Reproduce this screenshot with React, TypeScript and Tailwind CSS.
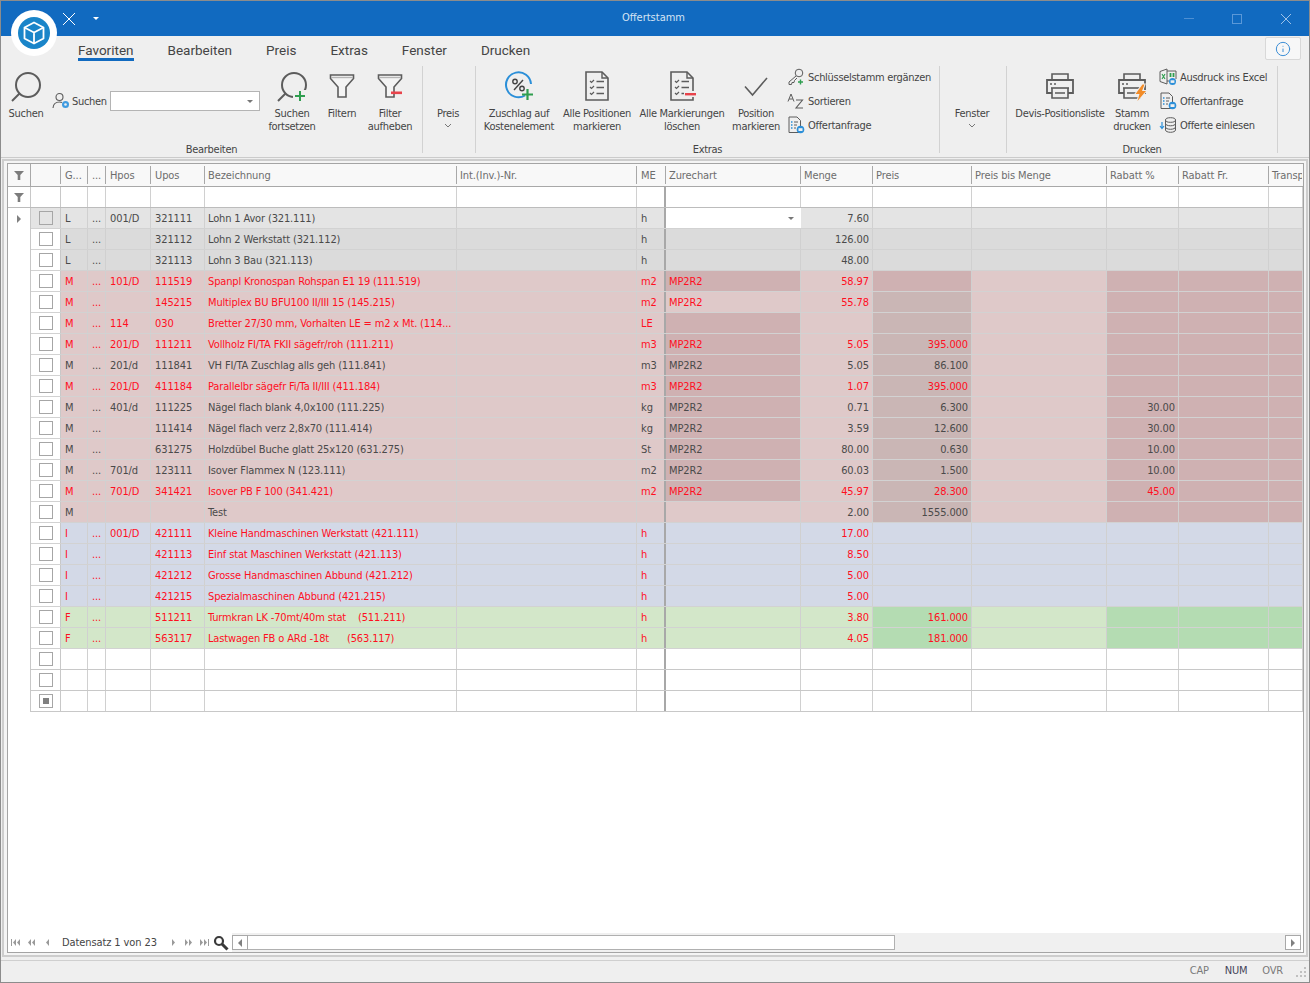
import type { ReactNode } from "react"
import { Info } from "lucide-react"

const GRAY = "#5c5c5c"
const GREEN = "#2f9e4f"
const RED = "#e8434b"
const BLUE = "#2b8fd8"

// funnel used in the ribbon and in the grid header
function Funnel({ minus }: { minus?: boolean }) {
  return (
    <svg width="28" height="28" viewBox="0 0 28 28" fill="none">
      <path d="M2.5 3h23v3.5l-7.5 8.5v10h-8V15L2.5 6.5z" stroke={GRAY} strokeWidth="1.6" fill="#f4f4f4" />
      <path d="M3 5.5h22" stroke="#b5b5b5" strokeWidth="1.4" />
      {minus && <rect x="19" y="15" width="8" height="4" fill="#efefef" />}
      {minus && <rect x="15" y="19.5" width="11" height="2.6" fill={RED} />}
    </svg>
  )
}

function SearchBig({ plus }: { plus?: boolean }) {
  return (
    <svg width="32" height="32" viewBox="0 -2 32 32" fill="none">
      <circle cx="18" cy="13" r="12" stroke={GRAY} strokeWidth="2" />
      <path d="M9.500 21.500 2 29" stroke={GRAY} strokeWidth="2" />
      {plus && <rect x="17" y="18" width="14" height="12" fill="#efefef" />}
      {plus && <path d="M24 19v10M19 24h10" stroke={GREEN} strokeWidth="2" />}
    </svg>
  )
}

function PercentIcon() {
  return (
    <svg width="30" height="30" viewBox="0 0 30 30" fill="none">
      <path d="M21 24.500A12.500 12.500 0 1 1 27 13" stroke={BLUE} strokeWidth="2" />
      <circle cx="11" cy="10.500" r="2.200" stroke="#444" strokeWidth="1.400" />
      <circle cx="18" cy="17.500" r="2.200" stroke="#444" strokeWidth="1.400" />
      <path d="M19 9 10 19" stroke="#444" strokeWidth="1.400" />
      <path d="M23.500 18v11M18 23.500h11" stroke={GREEN} strokeWidth="2.200" />
    </svg>
  )
}

function ListDoc({ minus }: { minus?: boolean }) {
  return (
    <svg width="30" height="32" viewBox="0 0 30 32" fill="none">
      <path d="M4 2h16l6 6v22H4z" stroke={GRAY} strokeWidth="1.600" />
      <path d="M20 2v6h6" stroke={GRAY} strokeWidth="1.400" />
      <path d="M8 11l1.500 1.500L12 10M8 17l1.500 1.500L12 16M8 23l1.500 1.500L12 22" stroke={GRAY} strokeWidth="1.200" />
      <path d="M14.500 11.500H22M14.500 17.500H22M14.500 23.500H22" stroke={GRAY} strokeWidth="1.600" />
      {minus && <rect x="17" y="21" width="13" height="6" fill="#efefef" />}
      {minus && <rect x="18" y="23" width="11" height="2.400" fill={RED} />}
    </svg>
  )
}

function Check() {
  return (
    <svg width="28" height="28" viewBox="0 0 28 28" fill="none">
      <path d="M3 14.500 10.500 23 25 6" stroke={GRAY} strokeWidth="1.600" />
    </svg>
  )
}

function Printer({ bolt }: { bolt?: boolean }) {
  return (
    <svg width="30" height="30" viewBox="0 0 30 30" fill="none">
      <path d="M7 9V3h16v6" stroke={GRAY} strokeWidth="1.600" />
      <path d="M7 22H2V9h26v13h-5" stroke={GRAY} strokeWidth="1.800" />
      <path d="M5 13h2M9 13h2" stroke={GRAY} strokeWidth="1.400" />
      <path d="M6 17h18" stroke={GRAY} strokeWidth="1.600" />
      <path d="M7 17v10h16V17M10 22h10" stroke={GRAY} strokeWidth="1.600" />
      {bolt && <path d="M25.500 13.500 18.500 23h4l-2 7 8.500-10h-4l2.500-6.500z" fill="#efefef" stroke="#efefef" strokeWidth="2" />}
      {bolt && <path d="M25.500 13.500 18.500 23h4l-2 7 8.500-10h-4l2.500-6.500z" fill="#f28c28" />}
    </svg>
  )
}

function PersonGear() {
  return (
    <svg width="18" height="18" viewBox="0 0 18 18" fill="none">
      <circle cx="7.500" cy="5" r="3.500" stroke={GRAY} strokeWidth="1.100" />
      <path d="M1 16c.3-4 2.500-6 6.500-6 1 0 1.800.1 2.500.5" stroke={GRAY} strokeWidth="1.100" />
      <circle cx="13.500" cy="12.500" r="3.500" fill="#3f9be0" />
      <circle cx="13.500" cy="12.500" r="1.300" fill="#efefef" />
    </svg>
  )
}

function KeyIcon() {
  return (
    <svg width="18" height="18" viewBox="0 0 18 18" fill="none">
      <circle cx="12" cy="5" r="3.800" stroke={GRAY} strokeWidth="1" />
      <path d="M9 8 2 14v2.500h2.500l.5-2h2l.5-2 2.500-2.500" stroke={GRAY} strokeWidth="1" />
      <path d="M13.500 11.500v5M11 14h5" stroke={GREEN} strokeWidth="1.400" />
    </svg>
  )
}

function AzIcon() {
  return (
    <svg width="18" height="18" viewBox="0 0 18 18" fill="none">
      <path d="M1 9.500 4 2l3 7.500M2.200 7h3.600" stroke={GRAY} strokeWidth="1" />
      <path d="M9 8h6.500L9 16h7" stroke={GRAY} strokeWidth="1.100" />
    </svg>
  )
}

function DocMail() {
  return (
    <svg width="18" height="18" viewBox="0 0 18 18" fill="none">
      <path d="M2 1h8l3.500 3.500V16.500H2z" stroke={GRAY} strokeWidth="1" />
      <path d="M4 6h1.500M4 9h1.500M4 12h1.500" stroke={BLUE} strokeWidth="1.400" />
      <path d="M7 6h4M7 9h3M7 12h2" stroke={GRAY} strokeWidth="1" />
      <circle cx="13.500" cy="13.500" r="3.800" fill={BLUE} />
      <rect x="11.500" y="12.200" width="4" height="2.800" fill="#efefef" />
    </svg>
  )
}

function ExcelIcon() {
  return (
    <svg width="18" height="18" viewBox="0 0 18 18" fill="none">
      <path d="M1 3.500 8 1v15l-7-2.500z" stroke={GRAY} strokeWidth="1" />
      <path d="M3 6l3 5M6 6l-3 5" stroke={GREEN} strokeWidth="1.100" />
      <path d="M8 3h9v8M8 13h2" stroke={GRAY} strokeWidth="1" />
      <path d="M11.500 5v4M14.500 5v4" stroke={GREEN} strokeWidth="1.800" />
      <circle cx="13.500" cy="13.500" r="3.500" fill={BLUE} />
      <rect x="11.600" y="12.300" width="3.800" height="2.600" fill="#efefef" />
    </svg>
  )
}

function DbImport() {
  return (
    <svg width="18" height="18" viewBox="0 0 18 18" fill="none">
      <ellipse cx="11.500" cy="4" rx="5" ry="2.300" stroke={GRAY} strokeWidth="1" />
      <path d="M6.500 4v10c0 1.300 2.200 2.300 5 2.300s5-1 5-2.300V4M6.500 7.500c0 1.300 2.200 2.300 5 2.300s5-1 5-2.300M6.500 11c0 1.300 2.200 2.300 5 2.300s5-1 5-2.300" stroke={GRAY} strokeWidth="1" />
      <path d="M3 6v6M1 10l2 2.500L5 10" stroke={BLUE} strokeWidth="1.200" />
    </svg>
  )
}

function Chevron() {
  return (
    <svg width="8" height="5" viewBox="0 0 8 5" className="mt-[3px]" fill="none">
      <path d="M1 1l3 3 3-3" stroke="#777" strokeWidth="1" />
    </svg>
  )
}

function Caret() {
  return <div className="w-0 h-0 border-l-[3px] border-r-[3px] border-t-[3px] border-l-transparent border-r-transparent border-t-[#777]" />
}

function Big({ w, icon, label }: { w: string; icon?: ReactNode; label: ReactNode }) {
  return (
    <div className={`${w} shrink-0 flex flex-col items-center text-center whitespace-nowrap`}>
      <div className="h-[41px] pb-[1px] flex items-center justify-center">{icon}</div>
      {label}
    </div>
  )
}

function Small({ icon, label }: { icon: ReactNode; label: string }) {
  return (
    <div className="h-[24px] flex items-center gap-[3px] whitespace-nowrap">
      <span className="w-[18px] flex justify-center">{icon}</span>
      <span>{label}</span>
    </div>
  )
}

function Group({ w, caption, children }: { w: string; caption?: string; children: ReactNode }) {
  return (
    <div className={`${w} h-[90px] flex flex-col`}>
      <div className="flex-1 flex">{children}</div>
      <div className="text-center h-[13px]">{caption}</div>
    </div>
  )
}

function Divider() {
  return <div className="w-px h-[87px] bg-[#d2d2d2]" />
}

function Ribbon() {
  return (
    <div className="h-[95px] pt-[4px] flex text-[11px] leading-[13px] text-[#454545] tracking-[-0.3px]">
      <Group w="w-[421px]" caption="Bearbeiten">
        <Big w="w-[50px]" icon={<SearchBig />} label="Suchen" />
        <div className="w-[211px] pt-[25px] pl-[1px]">
          <div className="flex items-center h-[20px]">
            <PersonGear />
            <span className="ml-[2px] w-[36px]">Suchen</span>
            <div className="ml-[2px] w-[150px] h-[20px] bg-white border border-[#b4b4b4] flex items-center justify-end pr-[6px]">
              <Caret />
            </div>
          </div>
        </div>
        <Big w="w-[60px]" icon={<SearchBig plus />} label={<>Suchen<br />fortsetzen</>} />
        <Big w="w-[40px]" icon={<Funnel />} label="Filtern" />
        <Big w="w-[56px]" icon={<Funnel minus />} label={<>Filter<br />aufheben</>} />
      </Group>
      <Divider />
      <Group w="w-[50px]">
        <Big w="w-full" label={<><span>Preis</span><div className="flex justify-center"><Chevron /></div></>} />
      </Group>
      <div className="w-[2px]" />
      <Divider />
      <Group w="w-[463px]" caption="Extras">
        <Big w="w-[86px]" icon={<PercentIcon />} label={<>Zuschlag auf<br />Kostenelement</>} />
        <Big w="w-[70px]" icon={<ListDoc />} label={<>Alle Positionen<br />markieren</>} />
        <Big w="w-[100px]" icon={<ListDoc minus />} label={<>Alle Markierungen<br />löschen</>} />
        <Big w="w-[48px]" icon={<Check />} label={<>Position<br />markieren</>} />
        <div className="ml-[7px] -mt-[1px]">
          <Small icon={<KeyIcon />} label="Schlüsselstamm ergänzen" />
          <Small icon={<AzIcon />} label="Sortieren" />
          <Small icon={<DocMail />} label="Offertanfrage" />
        </div>
      </Group>
      <Divider />
      <Group w="w-[64px]">
        <Big w="w-full" label={<><span>Fenster</span><div className="flex justify-center"><Chevron /></div></>} />
      </Group>
      <div className="w-[2px]" />
      <Divider />
      <Group w="w-[270px]" caption="Drucken">
        <Big w="w-[106px]" icon={<Printer />} label="Devis-Positionsliste" />
        <Big w="w-[38px]" icon={<Printer bolt />} label={<>Stamm<br />drucken</>} />
        <div className="ml-[8px] -mt-[1px]">
          <Small icon={<ExcelIcon />} label="Ausdruck ins Excel" />
          <Small icon={<DocMail />} label="Offertanfrage" />
          <Small icon={<DbImport />} label="Offerte einlesen" />
        </div>
      </Group>
      <Divider />
    </div>
  )
}

// grid columns, widths include the right border
const cols = [
  { w: "w-[27px]", title: "G...", pad: "pl-[4px]" },
  { w: "w-[18px]", title: "...", pad: "pl-[4px]" },
  { w: "w-[45px]", title: "Hpos", pad: "pl-[4px]" },
  { w: "w-[54px]", title: "Upos", pad: "pl-[4px]" },
  { w: "w-[252px]", title: "Bezeichnung", pad: "pl-[3px]" },
  { w: "w-[180px]", title: "Int.(Inv.)-Nr.", pad: "pl-[3px]" },
  { w: "w-[29px]", title: "ME", pad: "pl-[4px]" },
  { w: "w-[135px]", title: "Zurechart", pad: "pl-[3px]" },
  { w: "w-[72px]", title: "Menge", pad: "pl-[3px]" },
  { w: "w-[99px]", title: "Preis", pad: "pl-[3px]" },
  { w: "w-[135px]", title: "Preis bis Menge", pad: "pl-[3px]" },
  { w: "w-[72px]", title: "Rabatt %", pad: "pl-[3px]" },
  { w: "w-[90px]", title: "Rabatt Fr.", pad: "pl-[3px]" },
  { w: "w-[34px]", title: "Transport", pad: "pl-[3px]" },
]

type Row = [string, string, string, string, string, string, string, string, string, boolean, boolean?]

// G, Hpos, Upos, Bezeichnung, ME, Zurechart, Menge, Preis, Rabatt, red, Zurechart dark
const rows: Row[] = [
  ["L", "001/D", "321111", "Lohn 1 Avor (321.111)", "h", "", "7.60", "", "", false],
  ["L", "", "321112", "Lohn 2 Werkstatt (321.112)", "h", "", "126.00", "", "", false],
  ["L", "", "321113", "Lohn 3 Bau (321.113)", "h", "", "48.00", "", "", false],
  ["M", "101/D", "111519", "Spanpl Kronospan Rohspan E1 19 (111.519)", "m2", "MP2R2", "58.97", "", "", true, true],
  ["M", "", "145215", "Multiplex BU BFU100 II/III 15 (145.215)", "m2", "MP2R2", "55.78", "", "", true],
  ["M", "114", "030", "Bretter 27/30 mm, Vorhalten LE = m2 x Mt. (114...", "LE", "", "", "", "", true, true],
  ["M", "201/D", "111211", "Vollholz FI/TA FKII sägefr/roh (111.211)", "m3", "MP2R2", "5.05", "395.000", "", true, true],
  ["M", "201/d", "111841", "VH FI/TA Zuschlag alls geh (111.841)", "m3", "MP2R2", "5.05", "86.100", "", false, true],
  ["M", "201/D", "411184", "Parallelbr sägefr Fi/Ta II/III (411.184)", "m3", "MP2R2", "1.07", "395.000", "", true, true],
  ["M", "401/d", "111225", "Nägel flach blank 4,0x100 (111.225)", "kg", "MP2R2", "0.71", "6.300", "30.00", false, true],
  ["M", "", "111414", "Nägel flach verz 2,8x70 (111.414)", "kg", "MP2R2", "3.59", "12.600", "30.00", false, true],
  ["M", "", "631275", "Holzdübel Buche glatt 25x120 (631.275)", "St", "MP2R2", "80.00", "0.630", "10.00", false, true],
  ["M", "701/d", "123111", "Isover Flammex N (123.111)", "m2", "MP2R2", "60.03", "1.500", "10.00", false, true],
  ["M", "701/D", "341421", "Isover PB F 100 (341.421)", "m2", "MP2R2", "45.97", "28.300", "45.00", true, true],
  ["M", "", "", "Test", "", "", "2.00", "1555.000", "", false],
  ["I", "001/D", "421111", "Kleine Handmaschinen Werkstatt (421.111)", "h", "", "17.00", "", "", true],
  ["I", "", "421113", "Einf stat Maschinen Werkstatt (421.113)", "h", "", "8.50", "", "", true],
  ["I", "", "421212", "Grosse Handmaschinen Abbund (421.212)", "h", "", "5.00", "", "", true],
  ["I", "", "421215", "Spezialmaschinen Abbund (421.215)", "h", "", "5.00", "", "", true],
  ["F", "", "511211", "Turmkran LK -70mt/40m stat    (511.211)", "h", "", "3.80", "161.000", "", true],
  ["F", "", "563117", "Lastwagen FB o ARd -18t      (563.117)", "h", "", "4.05", "181.000", "", true],
]

function bgFor(g: string, i: number) {
  if (g === "L") return i === 0 ? "bg-[#e4e4e4]" : "bg-[#dbdbdb]"
  if (g === "M") return "bg-[#dfc9c9]"
  if (g === "I") return "bg-[#d3d9e7]"
  return "bg-[#d3e7c9]"
}

function Cell({ w, cls = "pl-[4px]", children }: { w: string; cls?: string; children?: ReactNode }) {
  return (
    <div className={`${w} shrink-0 h-full flex items-center border-r border-[#d0d0d0] whitespace-pre overflow-hidden ${cls}`}>
      {children}
    </div>
  )
}

function CheckCell({ bg = "bg-white", mark }: { bg?: string; mark?: boolean }) {
  return (
    <div className={`w-[30px] shrink-0 h-full flex items-center justify-center border-r border-[#c8c8c8] ${bg}`}>
      <div className="w-[14px] h-[14px] border border-[#a6a6a6] flex items-center justify-center">
        {mark && <div className="w-[6px] h-[6px] bg-[#808080]" />}
      </div>
    </div>
  )
}

function MeCell({ cls = "", children }: { cls?: string; children?: ReactNode }) {
  return (
    <div className={`w-[29px] shrink-0 h-full flex items-center pl-[4px] border-r-2 border-[#a8a8a8] ${cls}`}>{children}</div>
  )
}

function Indicator({ first }: { first?: boolean }) {
  return (
    <div className="w-[23px] shrink-0 h-full flex items-center justify-center border-r border-[#c8c8c8]">
      {first && <div className="w-0 h-0 border-y-[4px] border-l-[4px] border-y-transparent border-l-[#808080]" />}
    </div>
  )
}

function DataRow({ r, i }: { r: Row; i: number }) {
  const [g, hpos, upos, bez, me, zur, menge, preis, rabatt, red, zurDark] = r
  const bg = bgFor(g, i)
  const mat = g === "M"
  const dark = mat ? "bg-[#cfb1b2]" : g === "F" ? "bg-[#b4dcb2]" : ""
  const preisBg = mat ? (i === 3 ? "bg-[#cfb1b2]" : "bg-[#cab6b5]") : g === "F" ? "bg-[#b4dcb2]" : ""
  const isTest = bez === "Test"
  return (
    <div className={`h-[21px] flex ${red ? "text-[#ff0f1f]" : "text-[#4a4a4a]"}`}>
      <Indicator first={i === 0} />
      <div className="flex-1 h-full flex border-b border-[#d2d2d2]">
        <CheckCell bg={i === 0 ? "bg-[#e4e4e4]" : "bg-white"} />
        <Cell w="w-[27px]" cls={`${bg} pl-[4px]`}>{g}</Cell>
        <Cell w="w-[18px]" cls={`${bg} justify-center`}>{isTest ? "" : "..."}</Cell>
        <Cell w="w-[45px]" cls={`${bg} pl-[4px]`}>{hpos}</Cell>
        <Cell w="w-[54px]" cls={`${bg} pl-[4px]`}>{upos}</Cell>
        <Cell w="w-[252px]" cls={`${bg} pl-[3px] tracking-[-0.15px]`}>{bez}</Cell>
        <Cell w="w-[180px]" cls={bg} />
        <MeCell cls={bg}>{me}</MeCell>
        {i === 0 ? (
          <div className="w-[135px] shrink-0 h-full bg-white flex items-center justify-end pr-[7px]">
            <Caret />
          </div>
        ) : (
          <Cell w="w-[135px]" cls={`${zurDark ? dark : bg} pl-[3px]`}>{zur}</Cell>
        )}
        <Cell w="w-[72px]" cls={`${bg} justify-end pr-[3px]`}>{menge}</Cell>
        <Cell w="w-[99px]" cls={`${preisBg || bg} justify-end pr-[3px]`}>{preis}</Cell>
        <Cell w="w-[135px]" cls={bg} />
        <Cell w="w-[72px]" cls={`${dark || bg} justify-end pr-[3px]`}>{rabatt}</Cell>
        <Cell w="w-[90px]" cls={dark || bg} />
        <Cell w="w-[34px]" cls={dark || bg} />
      </div>
    </div>
  )
}

function EmptyRow({ mark }: { mark?: boolean }) {
  return (
    <div className="h-[21px] flex">
      <Indicator />
      <div className="flex-1 h-full flex border-b border-[#c8c8c8]">
        <CheckCell mark={mark} />
        {cols.map((c) =>
          c.title === "ME" ? <MeCell key={c.title} /> : <Cell key={c.title} w={c.w} cls="border-[#c8c8c8]" />
        )}
      </div>
    </div>
  )
}

function SmallFunnel() {
  return (
    <svg width="10" height="9" viewBox="0 0 10 9">
      <path d="M0 0h10L6.300 4v5H3.700V4z" fill="#7c7c7c" />
    </svg>
  )
}

function NavIcon({ d }: { d: string }) {
  return (
    <svg width="10" height="7" viewBox="0 0 10 7">
      <path d={d} fill="#9a9a9a" />
    </svg>
  )
}

function Grid() {
  return (
    <div className="flex-1 flex flex-col bg-white min-h-0 text-[11px] leading-[13px] tracking-[-0.1px]">
      <div className="h-[23px] flex items-center bg-[#f8f8f8] border-b border-[#a8a8a8] text-[#6d6d6d]">
        <div className="w-[22px] shrink-0 flex justify-center">
          <SmallFunnel />
        </div>
        <div className="w-[30px] shrink-0 h-full border-l border-[#a8a8a8]" />
        {cols.map((c) => (
          <div key={c.title} className={`${c.w} ${c.pad} shrink-0 h-[18px] flex items-center border-l border-[#a8a8a8] overflow-hidden whitespace-nowrap`}>
            {c.title}
          </div>
        ))}
      </div>
      <div className="h-[21px] flex border-b border-[#bcbcbc]">
        <div className="w-[23px] shrink-0 flex items-center justify-center border-r border-[#c8c8c8]">
          <SmallFunnel />
        </div>
        <div className="w-[30px] shrink-0 border-r border-[#c8c8c8]" />
        {cols.map((c) =>
          c.title === "ME" ? <MeCell key={c.title} /> : <Cell key={c.title} w={c.w} cls="border-[#c8c8c8]" />
        )}
      </div>
      {rows.map((r, i) => (
        <DataRow key={i} r={r} i={i} />
      ))}
      <EmptyRow />
      <EmptyRow />
      <EmptyRow mark />

      <div className="mt-auto h-[19px] flex items-center text-[#454545]">
        <div className="w-[54px] pl-[3px] flex items-center gap-[6px]">
          <NavIcon d="M0 0h1v7H0zM5 0v7L2 3.500zM9 0v7L6 3.500z" />
          <NavIcon d="M4 0v7L1 3.500zM8 0v7L5 3.500z" />
          <NavIcon d="M6 0v7L3 3.500z" />
        </div>
        <span className="w-[107px] whitespace-nowrap">Datensatz 1 von 23</span>
        <div className="w-[44px] flex items-center gap-[5px]">
          <NavIcon d="M3 0v7l3-3.500z" />
          <NavIcon d="M1 0v7l3-3.500zM5 0v7l3-3.500z" />
          <NavIcon d="M1 0v7l3-3.500zM5 0v7l3-3.500zM9 0h1v7H9z" />
        </div>
        <svg width="16" height="16" viewBox="0 0 16 16" fill="none" className="mr-[2px]">
          <circle cx="6" cy="6" r="4" stroke="#3a3a3a" strokeWidth="2.200" />
          <path d="M9 9l5.500 5.500" stroke="#3a3a3a" strokeWidth="3" />
        </svg>
        <div className="flex-1 h-[19px] flex items-center bg-[#f0f0f0] ml-[1px] mr-[2px]">
          <div className="w-[16px] h-[15px] bg-white border border-[#a8a8a8] flex items-center justify-center">
            <div className="w-0 h-0 border-y-[4px] border-r-[4px] border-y-transparent border-r-[#808080]" />
          </div>
          <div className="w-[647px] h-[15px] bg-white border border-[#b0b0b0] border-l-0" />
          <div className="ml-auto w-[16px] h-[15px] bg-white border border-[#a8a8a8] flex items-center justify-center">
            <div className="w-0 h-0 border-y-[4px] border-l-[4px] border-y-transparent border-l-[#808080]" />
          </div>
        </div>
      </div>
    </div>
  )
}

export default function App() {
  const tabs = ["Bearbeiten", "Preis", "Extras", "Fenster", "Drucken"]
  return (
    <div
      className="w-[1310px] h-[983px] relative flex flex-col bg-[#efefef] border border-[#8c8c8c] overflow-hidden"
      style={{ fontFamily: '"DejaVu Sans Condensed", Tahoma, "DejaVu Sans", sans-serif' }}
    >
      {/* title bar */}
      <div className="h-[35px] shrink-0 bg-[#116ac0] flex items-center text-[11px] relative">
        <svg width="14" height="14" viewBox="0 0 14 14" className="ml-[61px]" fill="none">
          <path d="M1 1l12 12M13 1 1 13" stroke="white" strokeWidth="1" />
        </svg>
        <div className="ml-[17px] w-0 h-0 border-x-[3px] border-t-[3px] border-x-transparent border-t-white" />
        <div className="flex-1 text-center text-[#d5e4f4] pl-[24px]">Offertstamm</div>
        <div className="flex items-center pr-[17px] gap-[38px]">
          <div className="w-[10px] h-px bg-[#4d8fd3]" />
          <div className="w-[10px] h-[10px] border border-[#5a98d8]" />
          <svg width="12" height="12" viewBox="0 0 12 12" fill="none">
            <path d="M1 1l10 10M11 1 1 11" stroke="#9cc1e8" strokeWidth="1" />
          </svg>
        </div>
      </div>

      {/* round app logo lies over title bar and tabs */}
      <div className="absolute left-[10px] top-[9px] w-[46px] h-[46px] rounded-full bg-white flex items-center justify-center">
        <div className="w-[32px] h-[32px] rounded-full bg-[#1a85c9] flex items-center justify-center">
          <svg width="22" height="24" viewBox="0 0 22 24" fill="none">
            <path d="M11 1.500 20.500 6.500v11L11 22.500 1.500 17.500v-11z" stroke="white" strokeWidth="1.800" strokeLinejoin="round" />
            <path d="M1.500 6.500 11 11.500l9.500-5M11 11.500v11" stroke="white" strokeWidth="1.800" />
          </svg>
        </div>
      </div>

      {/* tabs */}
      <div className="h-[26px] shrink-0 flex items-center pt-[2px] pl-[77px] gap-[34px] text-[13.5px] text-[#454545] relative" style={{ fontFamily: 'Roboto, sans-serif' }}>
        <div className="relative">
          Favoriten
          <div className="absolute left-0 right-0 -bottom-[1px] h-[3px] bg-[#116ac0]" />
        </div>
        {tabs.map((t) => (
          <div key={t}>{t}</div>
        ))}
        <div className="absolute right-[8px] top-[1px] w-[36px] h-[23px] bg-[#f7f7f7] border border-[#d8d8d8] rounded-[2px] flex items-center justify-center">
          <Info size={16} color="#3d8fd6" strokeWidth={1.5} />
        </div>
      </div>

      <Ribbon />

      {/* double frame round the grid */}
      <div className="flex-1 min-h-0 flex flex-col border-t border-[#cbcbcb] px-[1px] pt-[1px]">
        <div className="flex-1 min-h-0 flex flex-col border-2 border-[#cdcdcd] pl-[3px] pr-[2px] py-[2px] bg-[#f4f4f4]">
          <div className="flex-1 min-h-0 flex flex-col border border-[#a4a4a4] overflow-hidden">
            <Grid />
          </div>
        </div>
      </div>

      {/* status bar */}
      <div className="h-[22px] shrink-0 flex items-center justify-end text-[11px] tracking-[-0.2px] mt-[3px] border-t border-[#cfcfcf]">
        <span className="text-[#7a7a7a] mr-[16px]">CAP</span>
        <span className="text-[#45455a] mr-[15px]">NUM</span>
        <span className="text-[#7a7a7a] mr-[12px]">OVR</span>
        <svg width="12" height="12" viewBox="0 0 12 12" className="mr-[2px]">
          <path d="M9 1h2v2H9zM5 5h2v2H5zM9 5h2v2H9zM1 9h2v2H1zM5 9h2v2H5zM9 9h2v2H9z" fill="#c0c0c0" />
        </svg>
      </div>
    </div>
  )
}
